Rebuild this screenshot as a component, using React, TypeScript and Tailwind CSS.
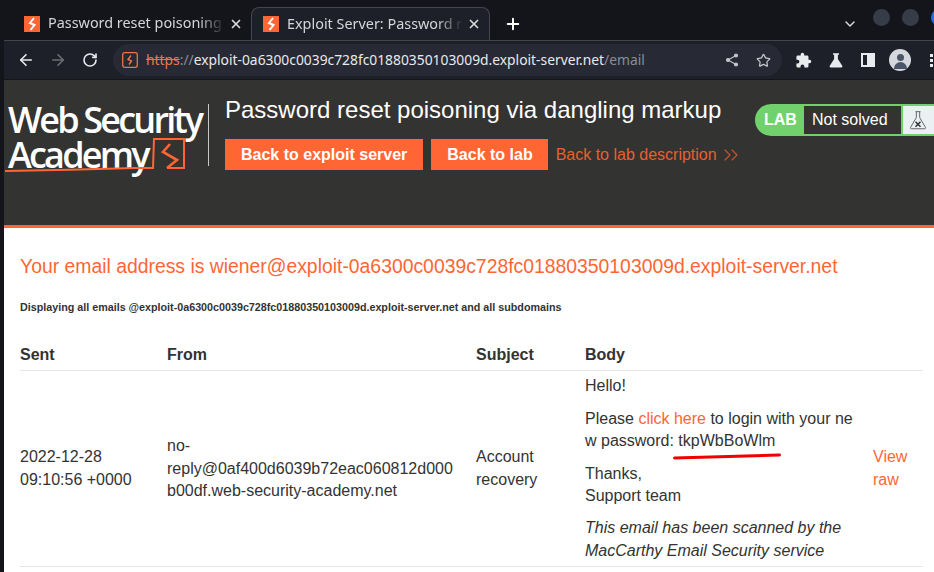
import { ArrowLeft, ArrowRight, ChevronDown, ChevronsRight, Plus, RotateCw, Star, X } from 'lucide-react';

const BoltIcon = ({ className }: { className?: string }) => (
  <svg viewBox="0 0 16 16" className={className}>
    <rect width="16" height="16" fill="#ff6633" />
    <path d="M10 2 L6 7 L10.5 9 L6.5 14" fill="none" stroke="#fff" strokeWidth="2" />
  </svg>
);

const Tab = ({ title, active }: { title: string; active?: boolean }) => (
  <div className={`flex items-center h-[33px] w-[239px] shrink-0 pr-[8px] rounded-t-lg ${active ? 'pl-[11px] bg-[#1e2029] border-t border-x border-[#44464d]' : 'pl-[12px]'}`}>
    <BoltIcon className="w-4 h-4 shrink-0" />
    <span className="ml-[8px] flex-1 overflow-hidden whitespace-nowrap font-['Noto_Sans',sans-serif] text-[14.4px] text-[#d5d6d9] [mask-image:linear-gradient(to_right,black_85%,transparent)]">
      {title}
    </span>
    <X size={14} strokeWidth={3} className="ml-1 shrink-0 text-[#d5d6d9]" />
  </div>
);

const Toolbar = () => (
  <div className="flex items-center h-[38px] bg-[#1e2029] pl-[13px] text-[#e8eaed]">
    <ArrowLeft size={18} strokeWidth={2.2} className="shrink-0" />
    <ArrowRight size={18} strokeWidth={2.2} className="ml-[14px] shrink-0 text-[#6c6e73]" />
    <RotateCw size={16} strokeWidth={2.4} className="ml-[15px] shrink-0" />
    <div className="ml-[15px] flex items-center h-[32px] w-[669px] shrink-0 rounded-full bg-[#272934] pl-[9px] pr-[11px]">
      <svg viewBox="0 0 16 16" className="w-4 h-4 shrink-0">
        <rect x="0.7" y="0.7" width="14.6" height="14.6" rx="2" fill="none" stroke="#e8774c" strokeWidth="1.3" />
        <path d="M9 3.5 L6 7.5 L9.5 9 L7 12.5" fill="none" stroke="#e8774c" strokeWidth="1.4" />
      </svg>
      <span className="ml-[8px] font-['Noto_Sans',sans-serif] text-[13.83px] whitespace-nowrap">
        <span className="text-[#e8774c] line-through">https</span>
        <span className="text-[#8b8d93]">://</span>
        exploit-0a6300c0039c728fc01880350103009d.exploit-server.net
        <span className="text-[#8b8d93]">/email</span>
      </span>
      <svg viewBox="0 0 14 14" className="ml-auto w-[14px] h-[14px] shrink-0" fill="#c4c6ca" stroke="#c4c6ca" strokeWidth="1.1">
        <path d="M11 2.5 L3 7 L11 11.5" fill="none" />
        <circle cx="11" cy="2.5" r="1.5" />
        <circle cx="3" cy="7" r="1.5" />
        <circle cx="11" cy="11.5" r="1.5" />
      </svg>
      <Star size={15} className="ml-[17px] shrink-0 text-[#c4c6ca]" />
    </div>
    <svg viewBox="0 0 24 24" className="ml-[13px] w-[17px] h-[17px] shrink-0" fill="#e8eaed">
      <path d="M20.5 11H19V7a2 2 0 0 0-2-2h-4V3.5a2.5 2.5 0 0 0-5 0V5H4a2 2 0 0 0-2 2v3.8h1.5a2.7 2.7 0 0 1 0 5.4H2V20a2 2 0 0 0 2 2h3.8v-1.5a2.7 2.7 0 0 1 5.4 0V22H17a2 2 0 0 0 2-2v-4h1.5a2.5 2.5 0 0 0 0-5z" />
    </svg>
    <svg viewBox="0 0 24 24" className="ml-[15px] w-[18px] h-[18px] shrink-0" fill="#e8eaed">
      <path d="M8 3h8v2h-1.5v5.5L20.5 20a1.5 1.5 0 0 1-1.3 2H4.8a1.5 1.5 0 0 1-1.3-2l6-9.5V5H8z" />
    </svg>
    <div className="ml-[16px] w-[14px] h-[14px] shrink-0 border-2 border-[#e8eaed] flex justify-end">
      <div className="w-[6px] bg-[#e8eaed]" />
    </div>
    <div className="ml-[14px] w-[22px] h-[22px] shrink-0 rounded-full bg-[#d5d8dd] overflow-hidden flex flex-col items-center pt-[5px]">
      <div className="w-[7px] h-[7px] rounded-full bg-[#4a5568]" />
      <div className="w-[13px] h-[7px] mt-[1px] rounded-t-full bg-[#4a5568]" />
    </div>
    <div className="ml-[19px] flex flex-col gap-[2px] shrink-0">
      <div className="w-[3px] h-[3px] bg-[#e8eaed]" />
      <div className="w-[3px] h-[3px] bg-[#e8eaed]" />
      <div className="w-[3px] h-[3px] bg-[#e8eaed]" />
    </div>
  </div>
);

const Logo = () => (
  <div className="relative w-[201px] h-[78px] shrink-0 text-white font-['Open_Sans',sans-serif] font-semibold leading-[35px] text-[36px] tracking-[-2.8px]">
    <div className="whitespace-nowrap pl-[4px]">Web Security</div>
    <div className="whitespace-nowrap pl-[4px]">Academy</div>
    <svg viewBox="4 0 201 78" className="absolute left-0 top-0 w-[201px] h-[78px]" fill="none" stroke="#ff6633" strokeWidth="2">
      <path d="M5 69 Q70 68 135 66 L153 66 L154 37 L184 37 L184 66 L167 66" />
      <path d="M170 42 L163 50 L177 58 L167 66" strokeWidth="2.6" />
    </svg>
  </div>
);

export default function App() {
  return (
    <div className="h-[572px] w-[934px] overflow-hidden border-l-[4px] border-[#14151a] bg-white font-['Liberation_Sans',sans-serif] text-[16px] leading-[22.4px] text-[#333332]">
      <div className="relative flex items-end h-[41px] bg-[#14151a] pl-[8px] border-b border-[#44464d]">
        <Tab title="Password reset poisoning via dangling markup" />
        <Tab title="Exploit Server: Password reset poisoning" active />
        <Plus size={18} strokeWidth={2.6} className="ml-[14px] mb-[7px] shrink-0 text-white" />
        <ChevronDown size={16} strokeWidth={2.2} className="ml-[320px] mb-[8px] shrink-0 text-[#d5d6d9]" />
        <div className="ml-[15px] mb-[14px] w-[17px] h-[17px] shrink-0 rounded-full bg-[#373c49]" />
        <div className="ml-[12px] mb-[14px] w-[17px] h-[17px] shrink-0 rounded-full bg-[#373c49]" />
        <div className="ml-[12px] mb-[14px] w-[17px] h-[17px] shrink-0 rounded-full bg-[#2a6be0]" />
      </div>
      <Toolbar />

      <header className="flex h-[146px] bg-[#333332] border-t border-[#14151a] pt-[22px]">
        <Logo />
        <div className="ml-[3px] mt-[2px] w-px h-[62px] shrink-0 bg-[#c8c8c8]" />
        <div className="ml-[16px] w-[530px] shrink-0">
          <h2 className="text-[24px] leading-[28px] text-white whitespace-nowrap -mt-[6px]">Password reset poisoning via dangling markup</h2>
          <div className="flex items-center mt-[15px]">
            <a className="h-[31px] leading-[31px] px-[16px] bg-[#ff6633] text-white font-bold">Back to exploit server</a>
            <a className="ml-[8px] h-[31px] leading-[31px] pl-[16px] pr-[15px] bg-[#ff6633] text-white font-bold">Back to lab</a>
            <a className="ml-[8px] h-[31px] leading-[31px] text-[#ea5f30] whitespace-nowrap">Back to lab description</a>
            <ChevronsRight size={24} strokeWidth={1.1} className="ml-[2px] shrink-0 text-[#c9552f]" />
          </div>
        </div>
        <div className="flex h-[32px] mt-[2px] w-[200px] shrink-0">
          <div className="flex items-center pl-[9px] w-[49px] rounded-l-full bg-[#70d16d] text-white font-bold">LAB</div>
          <div className="flex items-center pl-[8px] w-[99px] border-y-2 border-r-2 border-[#70d16d] text-white">Not solved</div>
          <div className="flex items-center pl-[5px] flex-1 border-y-2 border-[#70d16d] bg-[#ebf0f2]">
            <svg viewBox="0 0 24 24" className="w-[20px] h-[24px]" fill="none" stroke="#666666" strokeWidth="1.2">
              <path d="M9 2h6M10 2v7L3 21a1 1 0 0 0 1 1.5h16a1 1 0 0 0 1-1.5L14 9V2" />
              <path d="M9 14l6 6M15 14l-6 6" stroke="#333332" strokeWidth="1.8" />
            </svg>
          </div>
        </div>
      </header>

      <main className="border-t-[3px] border-[#ff6633] pl-[16px] pr-[20px] pt-[26px]">
        <h4 className="text-[19.36px] leading-[24px] text-[#ff6633] whitespace-nowrap">
          Your email address is wiener@exploit-0a6300c0039c728fc01880350103009d.exploit-server.net
        </h4>
        <h6 className="mt-[22px] text-[10.74px] leading-[14px] font-bold whitespace-nowrap">
          Displaying all emails @exploit-0a6300c0039c728fc01880350103009d.exploit-server.net and all subdomains
        </h6>
        <table className="mt-[30px] w-[903px] table-fixed border-collapse text-left">
          <colgroup>
            <col className="w-[147px]" />
            <col className="w-[309px]" />
            <col className="w-[109px]" />
            <col className="w-[288px]" />
            <col className="w-[50px]" />
          </colgroup>
          <thead>
            <tr className="border-b border-[#e6e6e6]">
              <th className="pb-[4px] font-bold">Sent</th>
              <th className="pb-[4px] font-bold">From</th>
              <th className="pb-[4px] font-bold">Subject</th>
              <th className="pb-[4px] font-bold" colSpan={2}>Body</th>
            </tr>
          </thead>
          <tbody>
            <tr className="border-b border-[#e6e6e6]">
              <td>2022-12-28<br />09:10:56 +0000</td>
              <td>no-<br />reply@0af400d6039b72eac060812d000<br />b00df.web-security-academy.net</td>
              <td>Account<br />recovery</td>
              <td className="pt-[4px] pb-[4px]">
                <p>Hello!</p>
                <p className="relative mt-[10px] w-[272px] break-all">
                  Please <a className="text-[#ff6633]">click here</a> to login with your new password: tkpWbBoWlm
                  <span className="absolute left-[88px] top-[47px] w-[108px] h-[3px] bg-[#f00000] rounded-full -rotate-[1.6deg]" />
                </p>
                <p className="mt-[10px]">Thanks,<br />Support team</p>
                <p className="mt-[10px] italic">This email has been scanned by the MacCarthy Email Security service</p>
              </td>
              <td className="text-[#ff6633]">View raw</td>
            </tr>
          </tbody>
        </table>
      </main>
    </div>
  );
}
